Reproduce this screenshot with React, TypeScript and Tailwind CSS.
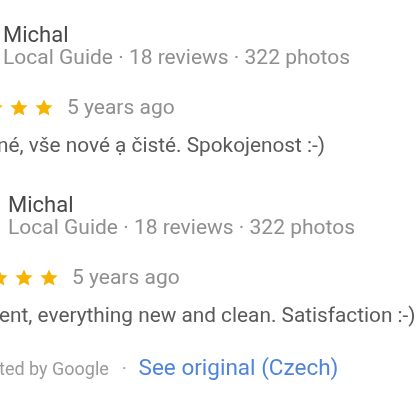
import React from "react";

const Star = () => (
  <svg width="18" height="17" viewBox="1.8 2.3 20.4 18.8" className="shrink-0">
    <path
      d="M12 2.5l2.9 6.3 6.9.7-5.2 4.6 1.5 6.8L12 17.4l-6.1 3.5 1.5-6.8-5.2-4.6 6.9-.7z"
      fill="#f6b400"
    />
  </svg>
);

function Stars() {
  return (
    <div className="flex items-center gap-[7px] -ml-[18px]">
      <Star />
      <Star />
      <Star />
    </div>
  );
}

function Review({ pl, text, textMl }: { pl: string; text: string; textMl: string }) {
  return (
    <div className={`flex flex-col ${pl}`}>
      <div className="text-[22px] leading-[23px] text-[#474747] whitespace-nowrap">Michal</div>
      <div className="text-[21px] leading-[23px] text-[#8f8f8f] whitespace-nowrap">
        Local Guide · 18 reviews · 322 photos
      </div>
      <div className="mt-[27px] flex items-center gap-[14px] h-[23px]">
        <Stars />
        <span className="text-[21px] leading-[23px] text-[#8f8f8f] whitespace-nowrap">5 years ago</span>
      </div>
      <div
        className={`mt-[15px] text-[20.8px] leading-[23px] text-[#5a5a5a] whitespace-nowrap ${textMl}`}
      >
        {text}
      </div>
    </div>
  );
}

export default function App() {
  return (
    <div
      className="w-[420px] h-[420px] overflow-hidden bg-white pt-[23px] blur-[0.5px]"
      style={{ fontFamily: "Roboto, 'Noto Sans', sans-serif" }}
    >
      <Review pl="pl-[3px]" text="né, vše nové ạ čisté. Spokojenost :-)" textMl="-ml-[6px]" />
      <div className="mt-[36px]">
        <Review
          pl="pl-[8px]"
          text="ent, everything new and clean. Satisfaction :-)"
          textMl="-ml-[9px]"
        />
      </div>
      <div className="mt-[29px] flex items-baseline whitespace-nowrap h-[23px] leading-[23px]">
        <span className="text-[18px] text-[#9a9a9a] -ml-[1px]">ted by Google</span>
        <span className="text-[18px] text-[#9a9a9a] ml-[13px]">·</span>
        <span className="text-[22.5px] text-[#4f84dc] ml-[12px]">See original (Czech)</span>
      </div>
    </div>
  );
}
